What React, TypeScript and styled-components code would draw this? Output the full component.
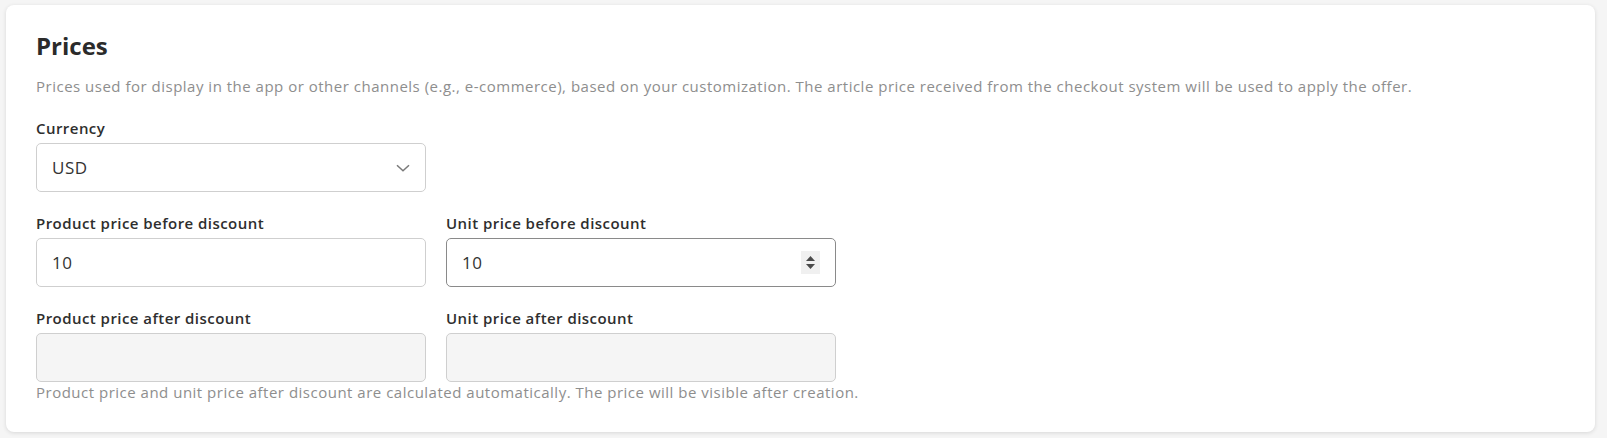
import React from "react";
import styled, { createGlobalStyle } from "styled-components";

const Global = createGlobalStyle`
  html, body { margin: 0; padding: 0; background: #f5f5f5; }
  body { font-family: "Open Sans", "Liberation Sans", sans-serif; }
  * { box-sizing: border-box; }
`;

const Page = styled.div`
  padding: 5px 12px 7px 6px;
`;

const Card = styled.section`
  background: #fff;
  border-radius: 8px;
  box-shadow: 0 1px 4px rgba(0, 0, 0, 0.12);
  padding: 26px 30px 30px 30px;
`;

const Title = styled.h2`
  margin: 0;
  font-size: 24px;
  line-height: 30px;
  font-weight: 700;
  color: #2b2b2b;
`;

const Description = styled.p`
  margin: 15px 0 0 0;
  font-size: 15px;
  line-height: 20px;
  letter-spacing: 0.5px;
  color: #8e8e8e;
`;

const Field = styled.div`
  display: flex;
  flex-direction: column;
`;

const Label = styled.label`
  font-size: 15px;
  line-height: 20px;
  font-weight: 600;
  letter-spacing: 0.45px;
  color: #2e2e2e;
  margin-bottom: 5px;
`;

const Block = styled.div<{ $top: number }>`
  margin-top: ${(p) => p.$top}px;
`;

const Row = styled.div`
  display: grid;
  grid-template-columns: 390px 390px;
  column-gap: 20px;
`;

const Box = styled.div<{ $disabled?: boolean; $active?: boolean }>`
  height: 49px;
  width: 390px;
  border: 1px solid ${(p) => (p.$active ? "#8a8a8a" : "#cfcfcf")};
  border-radius: 5px;
  background: ${(p) => (p.$disabled ? "#f5f5f5" : "#fff")};
  display: flex;
  align-items: center;
  padding: 0 15px;
  font-size: 17px;
  letter-spacing: 0.5px;
  color: #333;
`;

const Value = styled.span`
  flex: 1;
`;

const Chevron = styled.svg`
  width: 14px;
  height: 8px;
`;

const Spinner = styled.div`
  width: 19px;
  height: 23px;
  background: #f0f0f0;
  display: flex;
  flex-direction: column;
  align-items: center;
  justify-content: center;
  gap: 3px;
`;

const Tri = styled.svg`
  width: 9px;
  height: 5px;
  display: block;
`;

const Helper = styled.p`
  margin: 0;
  font-size: 15px;
  line-height: 20px;
  letter-spacing: 0.5px;
  color: #8e8e8e;
`;

export default function App() {
  return (
    <>
      <Global />
      <Page>
        <Card>
          <Title>Prices</Title>
          <Description>
            Prices used for display in the app or other channels (e.g., e-commerce), based on your customization. The
            article price received from the checkout system will be used to apply the offer.
          </Description>
          <Block $top={22}>
            <Field>
              <Label>Currency</Label>
              <Box>
                <Value>USD</Value>
                <Chevron viewBox="0 0 14 8">
                  <path d="M1 1.2 L7 6.8 L13 1.2" fill="none" stroke="#7a7a7a" strokeWidth="1.5" />
                </Chevron>
              </Box>
            </Field>
          </Block>
          <Block $top={21}>
            <Row>
              <Field>
                <Label>Product price before discount</Label>
                <Box>
                  <Value>10</Value>
                </Box>
              </Field>
              <Field>
                <Label>Unit price before discount</Label>
                <Box $active>
                  <Value>10</Value>
                  <Spinner>
                    <Tri viewBox="0 0 9 5">
                      <path d="M4.5 0 L9 5 L0 5 Z" fill="#4a4a4a" />
                    </Tri>
                    <Tri viewBox="0 0 9 5">
                      <path d="M0 0 L9 0 L4.5 5 Z" fill="#4a4a4a" />
                    </Tri>
                  </Spinner>
                </Box>
              </Field>
            </Row>
          </Block>
          <Block $top={21}>
            <Row>
              <Field>
                <Label>Product price after discount</Label>
                <Box $disabled />
              </Field>
              <Field>
                <Label>Unit price after discount</Label>
                <Box $disabled />
              </Field>
            </Row>
          </Block>
          <Helper>
            Product price and unit price after discount are calculated automatically. The price will be visible after
            creation.
          </Helper>
        </Card>
      </Page>
    </>
  );
}
